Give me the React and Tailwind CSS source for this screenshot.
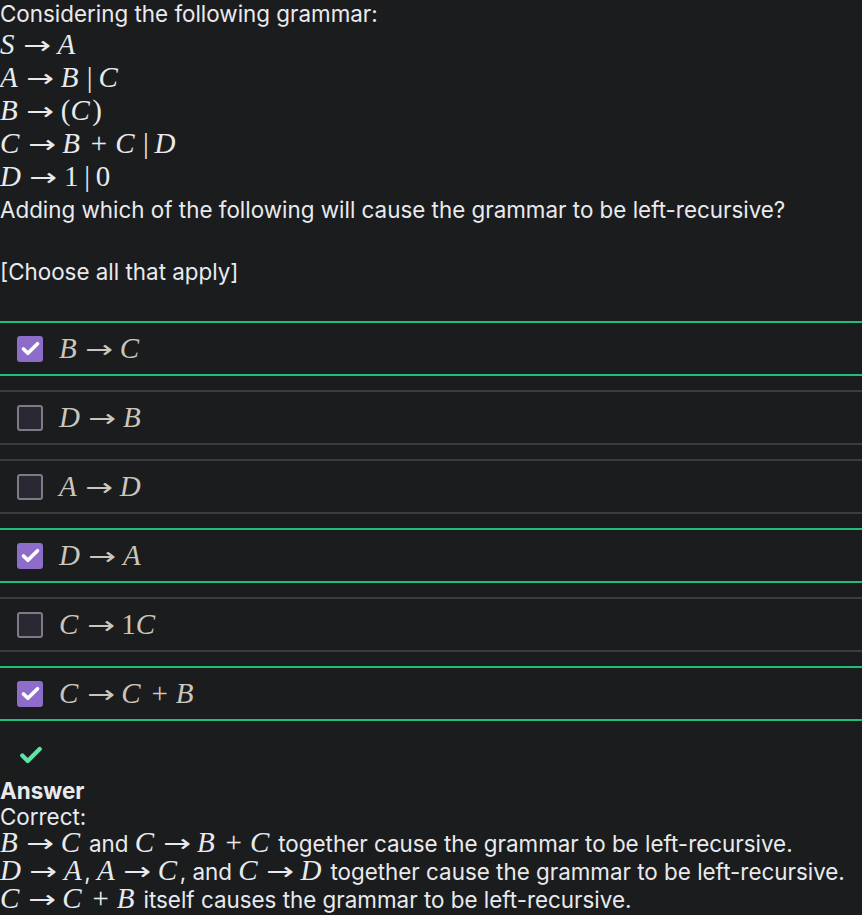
import { useState } from "react";

// tiny math renderer: capitals italic, the rest upright with KaTeX-ish spacing
function M({ children, className = "" }) {
  const parts = [];
  const s = children;
  for (let i = 0; i < s.length; i++) {
    const c = s[i];
    if (c === " ") continue;
    if (/[A-Z]/.test(c)) {
      parts.push(
        <span key={i} className="italic pr-[0.09em]">
          {c}
        </span>
      );
    } else if (c === "→") {
      parts.push(
        <span
          key={i}
          className="inline-block mx-[0.4em] font-['DejaVu_Sans',sans-serif] text-[0.85em] scale-x-[1.35]"
        >
          →
        </span>
      );
    } else if (c === "+") {
      parts.push(
        <span key={i} className="mx-[0.28em]">
          +
        </span>
      );
    } else if (c === "|") {
      parts.push(
        <span key={i} className="mx-[0.2em]">
          |
        </span>
      );
    } else {
      parts.push(<span key={i}>{c}</span>);
    }
  }
  return (
    <span
      className={`font-['Liberation_Serif',serif] text-[29px] ${className}`}
    >
      {parts}
    </span>
  );
}

const options = [
  { expr: "B → C", checked: true },
  { expr: "D → B", checked: false },
  { expr: "A → D", checked: false },
  { expr: "D → A", checked: true },
  { expr: "C → 1C", checked: false },
  { expr: "C → C + B", checked: true },
];

function Check({ className, width = "3.6" }) {
  return (
    <svg viewBox="0 0 24 24" className={className} fill="none">
      <path
        d="M4 12.5l5 5L20 6.5"
        stroke="currentColor"
        strokeWidth={width}
        strokeLinecap="round"
        strokeLinejoin="round"
      />
    </svg>
  );
}

export default function App() {
  const [picked, setPicked] = useState(
    options.map((o) => o.checked)
  );

  return (
    <div className="min-h-screen bg-[#1b1c1e] text-[#e8eaed] font-['Inter',sans-serif] text-[22.4px] overflow-hidden">
      <div className="leading-[28px]">Considering the following grammar:</div>
      <div className="flex flex-col">
        <div className="h-[33px] leading-[33px]">
          <M>S → A</M>
        </div>
        <div className="h-[33px] leading-[33px]">
          <M>A → B | C</M>
        </div>
        <div className="h-[33px] leading-[33px]">
          <M>B → (C)</M>
        </div>
        <div className="h-[33px] leading-[33px]">
          <M>C → B + C | D</M>
        </div>
        <div className="h-[33px] leading-[33px]">
          <M>D → 1 | 0</M>
        </div>
      </div>
      <div className="leading-[28px] mt-[3px]">
        Adding which of the following will cause the grammar to be
        left-recursive?
      </div>
      <div className="leading-[28px] mt-[34px]">[Choose all that apply]</div>

      <div className="mt-[35px] flex flex-col gap-[14px]">
        {options.map((o, i) => (
          <div
            key={i}
            onClick={() =>
              setPicked(picked.map((p, j) => (j === i ? !p : p)))
            }
            className={`h-[55px] border-y-2 flex items-center pl-[17px] gap-[16px] cursor-pointer ${
              picked[i] ? "border-[#1fbf75]" : "border-[#3b3c3e]"
            }`}
          >
            {picked[i] ? (
              <div className="w-[26px] h-[26px] rounded-[3px] bg-[#8d6cca] flex items-center justify-center text-white">
                <Check className="w-[21px] h-[21px]" width="4.2" />
              </div>
            ) : (
              <div className="w-[26px] h-[26px] rounded-[3px] bg-[#2a2833] border-2 border-[#7d7c86]" />
            )}
            <M className="text-[#cbc6bc]">{o.expr}</M>
          </div>
        ))}
      </div>

      <div className="pt-[21px] pl-[18px]">
        <Check className="w-[26px] h-[26px] text-[#5fe3a6]" width="4" />
      </div>
      <div className="mt-[10px] font-bold leading-[26px]">Answer</div>
      <div className="leading-[25px]">Correct:</div>
      <div className="leading-[27px]">
        <div className="whitespace-nowrap">
          <M>B → C</M> and <M>C → B + C</M> together cause the grammar to be
          left-recursive.
        </div>
        <div className="whitespace-nowrap">
          <M>D → A</M>, <M>A → C</M>, and <M>C → D</M> together cause the
          grammar to be left-recursive.
        </div>
        <div className="whitespace-nowrap">
          <M>C → C + B</M> itself causes the grammar to be left-recursive.
        </div>
      </div>
    </div>
  );
}
